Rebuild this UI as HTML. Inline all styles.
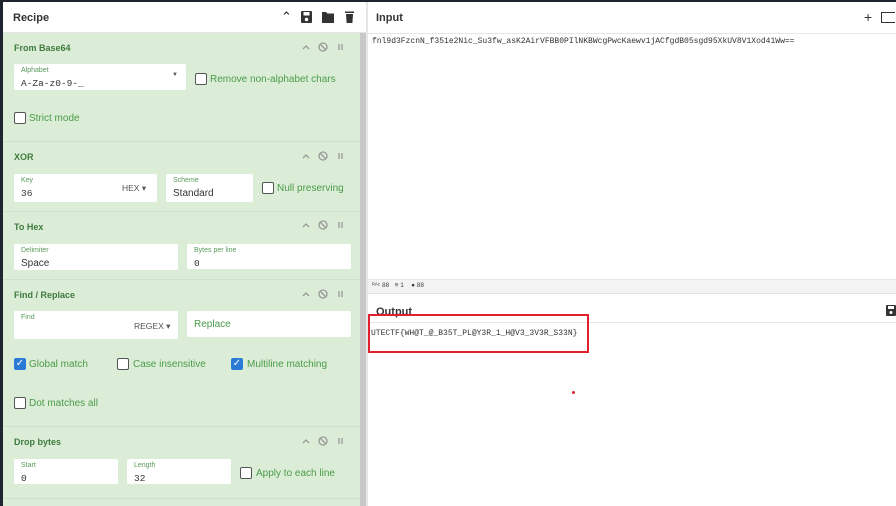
<!DOCTYPE html>
<html><head><meta charset="utf-8"><style>
*{box-sizing:border-box;margin:0;padding:0}
body{width:896px;height:506px;overflow:hidden;background:#1e2430;font-family:"Liberation Sans",sans-serif;position:relative}
.abs{position:absolute}
#left{left:3px;top:2px;width:357px;height:504px;background:#dcedd7}
#rh{left:3px;top:2px;width:363px;height:31px;background:#fff;border-bottom:1px solid #e4e4e4}
#sb{left:360px;top:33px;width:6px;height:473px;background:#c8c8c8}
#right{left:366px;top:2px;width:530px;height:504px;background:#fff;border-left:2px solid #e6e6e6}
.h{font-size:11px;font-weight:bold;color:#333}
.op{font-size:9px;font-weight:bold;color:#3e7a3e}
.box{background:#fff;border-radius:2px}
.lbl{font-size:7px;color:#5a9a5a;position:absolute;left:7px;top:3px}
.val{font-size:10px;color:#333;position:absolute;left:7px;top:14px}
.mono{font-family:"Liberation Mono",monospace}
.cb{width:12px;height:12px;border:1.5px solid #555;background:#fff;border-radius:2px}
.cbx{width:12px;height:12px;background:#2a7ad6;border-radius:2px;color:#fff;font-size:10px;line-height:12px;text-align:center}
.ct{font-size:10px;color:#4a9a4a;margin-top:1px}
.sep{left:3px;width:357px;height:1px;background:#cfe2ca}
</style></head><body>
<div class="abs" id="left"></div>
<div class="abs" id="rh"></div>
<div class="abs h" style="left:13px;top:12px">Recipe</div>
<div class="abs" style="left:281px;top:9px;font-size:13px;color:#222">&#8963;</div>
<svg class="abs" style="left:300px;top:11px" width="60" height="13"><rect x="1" y="0" width="11" height="12" rx="1" fill="#333"/><rect x="3.5" y="1" width="6" height="3.5" fill="#fff"/><circle cx="6.5" cy="8.5" r="1.7" fill="#fff"/><path d="M22 1h4l1.5 1.5H34v9.5H22z" fill="#333"/><rect x="45" y="0.5" width="9" height="1.5" fill="#333"/><path d="M46 3h7l-.6 9h-5.8z" fill="#333"/></svg>
<div class="abs" id="sb"></div>

<div class="abs op" style="left:14px;top:43px">From Base64</div>
<div class="abs box" style="left:14px;top:64px;width:172px;height:26px"><div class="lbl">Alphabet</div><div class="val mono" style="font-size:9.5px">A-Za-z0-9-_</div><div class="abs" style="right:8px;top:8px;font-size:6px;color:#555">▼</div></div>
<div class="abs cb" style="left:195px;top:73px"></div><div class="abs ct" style="left:210px;top:73px">Remove non-alphabet chars</div>
<div class="abs cb" style="left:14px;top:112px"></div><div class="abs ct" style="left:29px;top:112px">Strict mode</div>
<div class="abs sep" style="top:141px"></div>

<div class="abs op" style="left:14px;top:152px">XOR</div>
<div class="abs box" style="left:14px;top:174px;width:143px;height:28px"><div class="lbl">Key</div><div class="val mono" style="font-size:9.5px">36</div><div class="abs" style="left:108px;top:9px;font-size:8.5px;color:#555">HEX ▾</div></div>
<div class="abs box" style="left:166px;top:174px;width:87px;height:28px"><div class="lbl">Scheme</div><div class="val">Standard</div></div>
<div class="abs cb" style="left:262px;top:182px"></div><div class="abs ct" style="left:277px;top:182px">Null preserving</div>
<div class="abs sep" style="top:211px"></div>

<div class="abs op" style="left:14px;top:222px">To Hex</div>
<div class="abs box" style="left:14px;top:244px;width:164px;height:26px"><div class="lbl">Delimiter</div><div class="val">Space</div></div>
<div class="abs box" style="left:187px;top:244px;width:164px;height:25px"><div class="lbl">Bytes per line</div><div class="val mono" style="font-size:9.5px">0</div></div>
<div class="abs sep" style="top:279px"></div>

<div class="abs op" style="left:14px;top:290px">Find / Replace</div>
<div class="abs box" style="left:14px;top:311px;width:164px;height:28px"><div class="lbl">Find</div><div class="abs" style="left:120px;top:10px;font-size:8.5px;color:#555">REGEX ▾</div></div>
<div class="abs box" style="left:187px;top:311px;width:164px;height:26px"><div class="abs ct" style="left:7px;top:7px">Replace</div></div>
<div class="abs cbx" style="left:14px;top:358px">✓</div><div class="abs ct" style="left:29px;top:358px">Global match</div>
<div class="abs cb" style="left:117px;top:358px"></div><div class="abs ct" style="left:133px;top:358px">Case insensitive</div>
<div class="abs cbx" style="left:231px;top:358px">✓</div><div class="abs ct" style="left:247px;top:358px">Multiline matching</div>
<div class="abs cb" style="left:14px;top:397px"></div><div class="abs ct" style="left:29px;top:397px">Dot matches all</div>
<div class="abs sep" style="top:426px"></div>

<div class="abs op" style="left:14px;top:437px">Drop bytes</div>
<div class="abs box" style="left:14px;top:459px;width:104px;height:25px"><div class="lbl">Start</div><div class="val mono" style="font-size:9.5px">0</div></div>
<div class="abs box" style="left:127px;top:459px;width:104px;height:25px"><div class="lbl">Length</div><div class="val mono" style="font-size:9.5px">32</div></div>
<div class="abs cb" style="left:240px;top:467px"></div><div class="abs ct" style="left:256px;top:467px">Apply to each line</div>
<div class="abs sep" style="top:498px"></div>

<svg class="abs" style="left:300px;top:40px" width="50" height="420">
<g id="c" fill="none" stroke="#999" stroke-width="1.3"><path d="M3 9l3-3 3 3"/><circle cx="23" cy="7" r="4"/><path d="M20 4l6 6"/><path d="M39 4v6M42 4v6"/></g>
<use href="#c" y="109"/><use href="#c" y="178"/><use href="#c" y="247"/><use href="#c" y="394"/>
</svg>

<div class="abs" id="right"></div>
<div class="abs" style="left:368px;top:33px;width:528px;height:1px;background:#e6e6e6"></div>
<div class="abs h" style="left:376px;top:12px">Input</div>
<div class="abs" style="left:864px;top:9px;font-size:14px;color:#333">+</div>
<div class="abs" style="left:881px;top:12px;width:14px;height:11px;border:1.5px solid #333;border-right:none"></div>
<div class="abs mono" style="left:372px;top:37px;font-size:8px;color:#333">fnl9d3FzcnN_f351e2Nic_Su3fw_asK2AirVFBB0PIlNKBWcgPwcKaewv1jACfgdB05sgd95XkUV8V1Xod41Ww==</div>
<div class="abs" style="left:368px;top:279px;width:528px;height:15px;background:#f3f3f3;border-top:1px solid #e6e6e6;border-bottom:1px solid #e2e2e2"></div>
<div class="abs" style="left:372px;top:282px;font-size:6.5px;color:#444">ᴿᴬᶜ 88 &nbsp;&nbsp;≡ 1 &nbsp;&nbsp; ● 88</div>
<div class="abs h" style="left:376px;top:306px">Output</div>
<svg class="abs" style="left:886px;top:305px" width="10" height="12"><rect width="10" height="11" rx="1" fill="#333"/><rect x="2" y="1" width="6" height="3" fill="#fff"/><circle cx="5" cy="7.5" r="1.5" fill="#fff"/></svg>
<div class="abs" style="left:368px;top:322px;width:528px;height:1px;background:#e6e6e6"></div>
<div class="abs" style="left:368px;top:314px;width:221px;height:39px;border:2px solid #e0202e"></div>
<div class="abs mono" style="left:371px;top:329px;font-size:8px;color:#333">UTECTF{WH@T_@_B35T_PL@Y3R_1_H@V3_3V3R_S33N}</div>
<div class="abs" style="left:572px;top:391px;width:3px;height:3px;background:#e0202e;border-radius:50%"></div>
</body></html>
